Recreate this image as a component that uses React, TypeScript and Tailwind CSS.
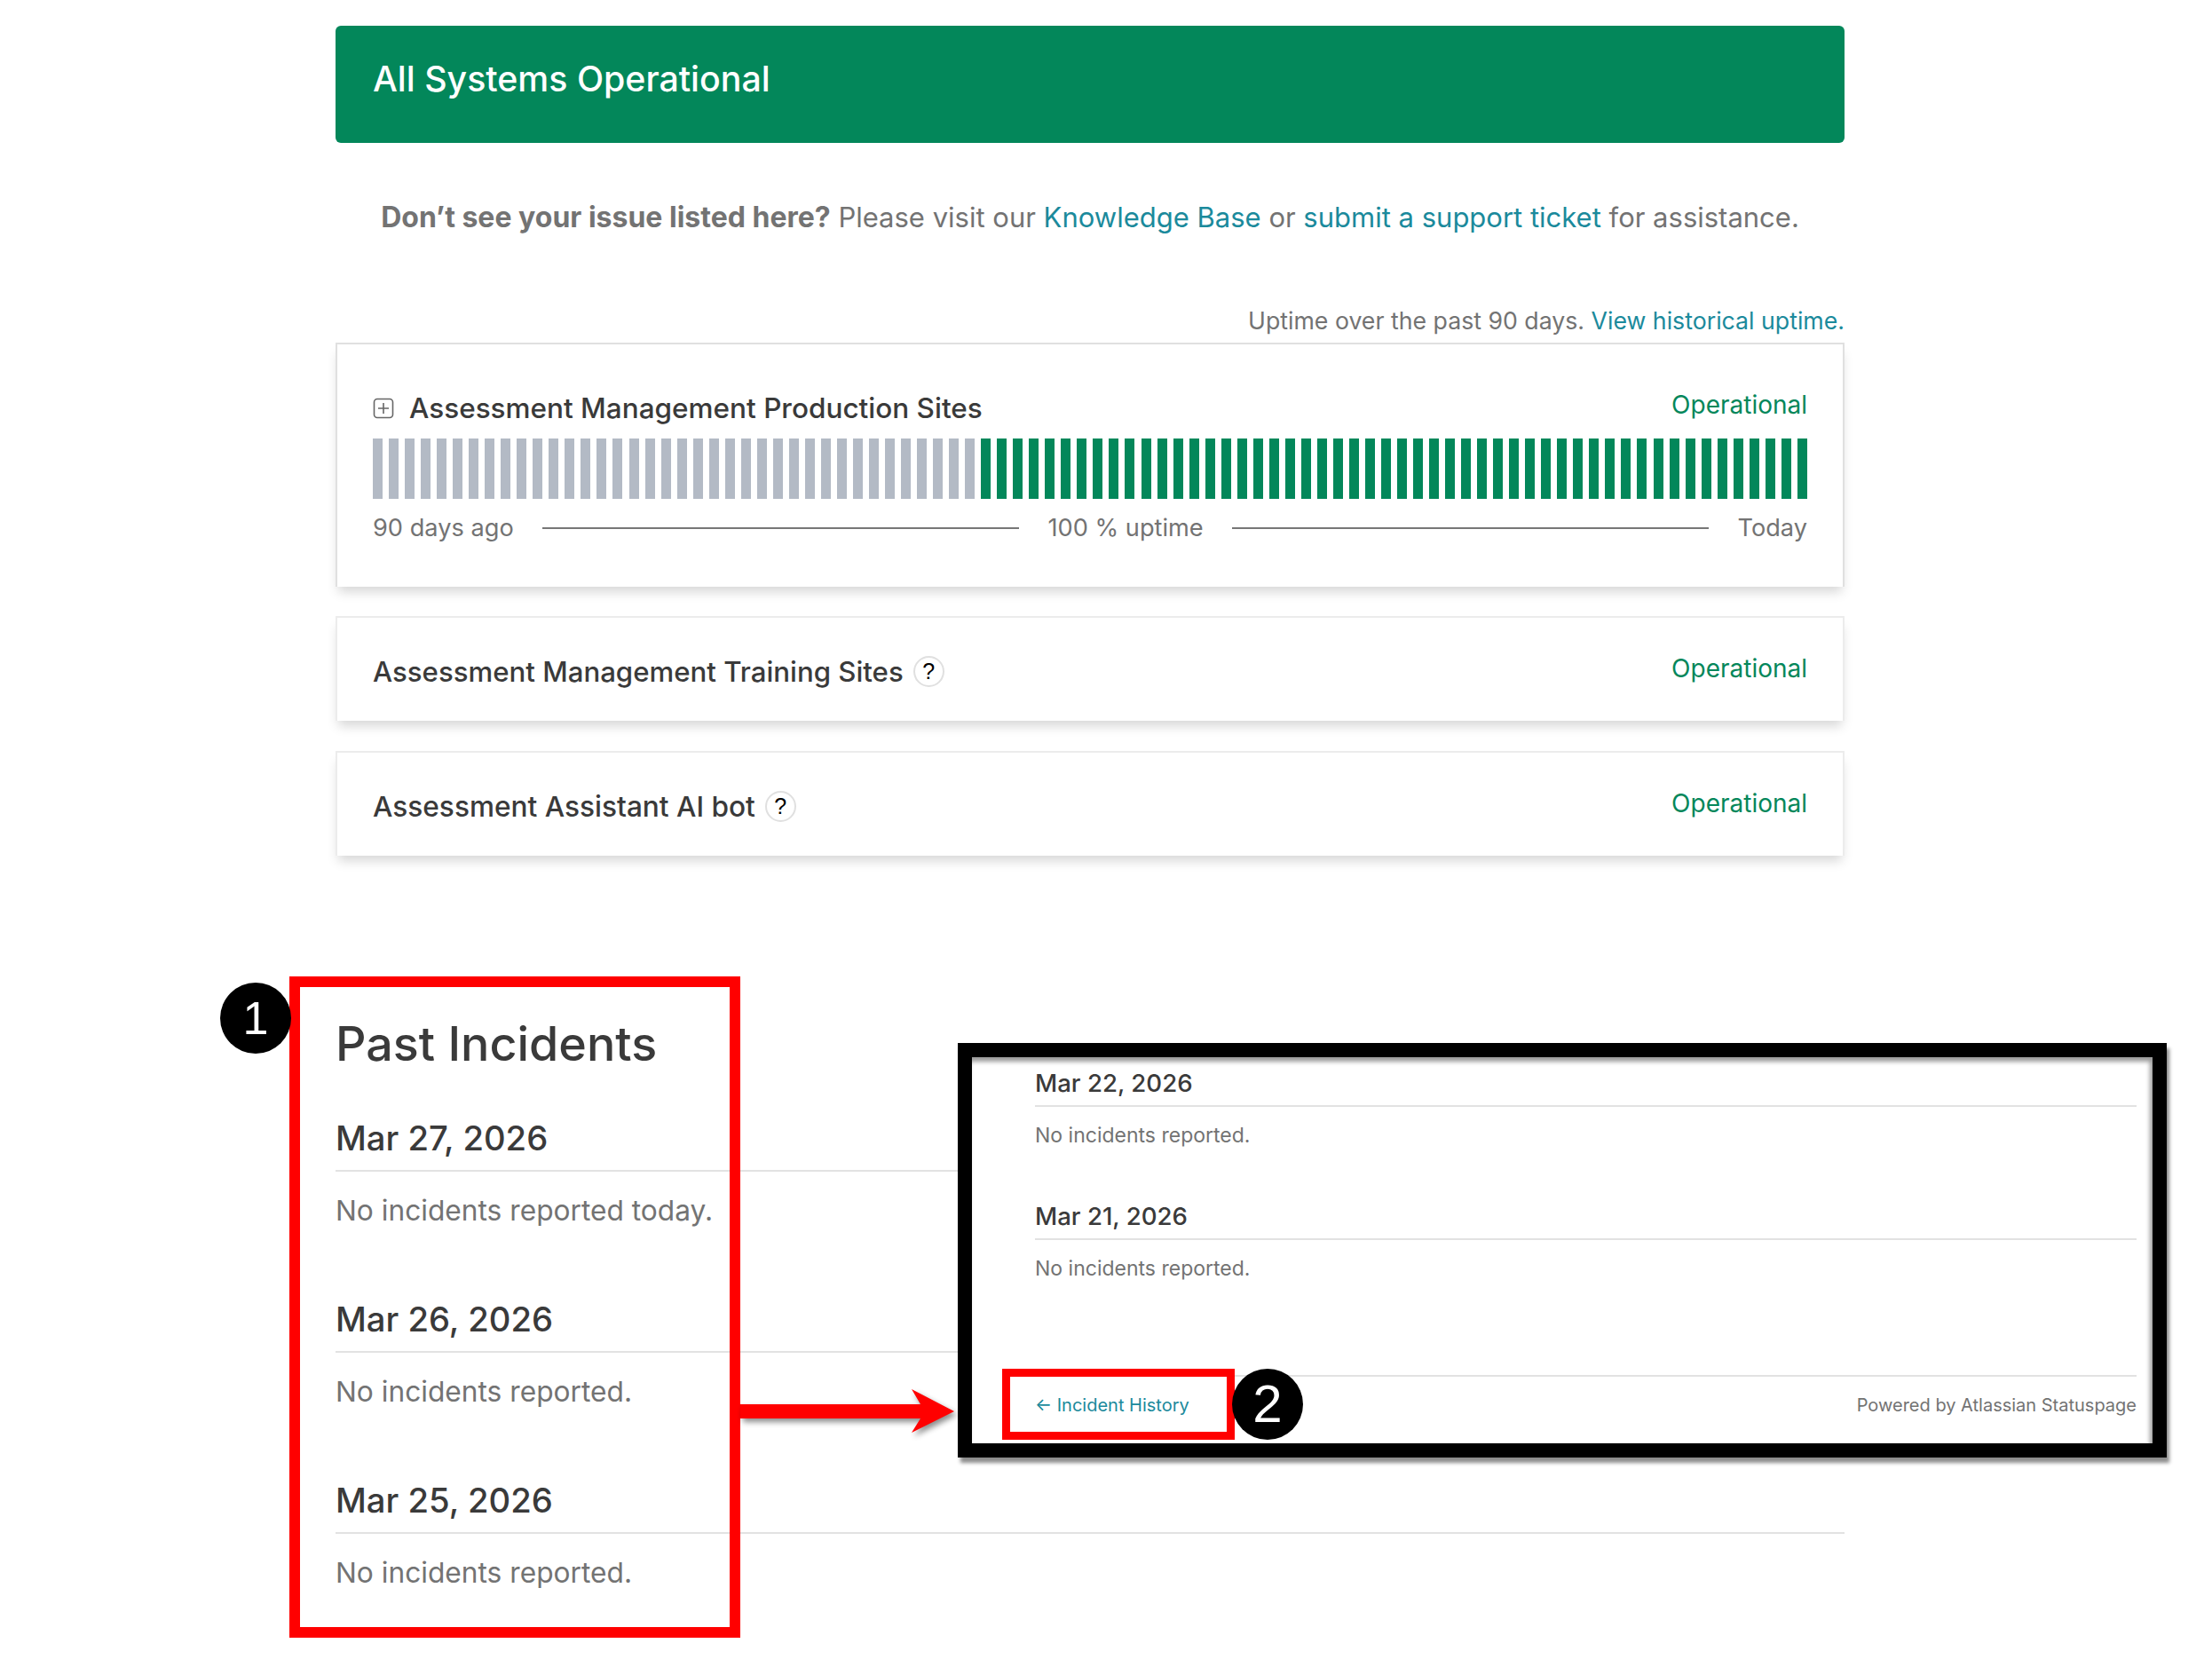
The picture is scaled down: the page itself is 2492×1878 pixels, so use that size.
const GREY_DAYS = 38;
const DAYS = Array.from({ length: 90 }, (_, i) => i);

const TEAL = 'text-[#1b8a9c]';

function Help() {
  return (
    <span className="ml-[11px] flex h-[35px] w-[35px] items-center justify-center rounded-full border-2 border-[#e0e0e0] font-['Liberation_Sans',sans-serif] text-[25px] text-black">?</span>
  );
}

function Status({ mb }: { mb: string }) {
  return <span className={`text-[28px] text-[#05875b] ${mb}`}>Operational</span>;
}

function SmallCard({ name, top, size }: { name: string; top: string; size: string }) {
  return (
    <div className={`flex h-[118px] items-center justify-between border-x-2 border-t-2 border-[#ececec] bg-white px-[40px] shadow-[0_9px_12px_-3px_rgba(0,0,0,0.16)] ${top}`}>
      <div className={`flex items-center pt-[6px] font-medium text-[#3a3a3a] ${size}`}>
        {name}
        <Help />
      </div>
      <Status mb="mb-[3px]" />
    </div>
  );
}

function Day({ date, text }: { date: string; text: string }) {
  return (
    <div className="mb-[72px]">
      <h3 className="h-[68px] border-b-2 border-[#e2e2e2] text-[38.2px] font-medium leading-[60px] text-[#3a3a3a]">{date}</h3>
      <p className="mt-[24px] text-[31.7px] leading-[40px] text-[#737373]">{text}</p>
    </div>
  );
}

function MiniDay({ date, mb }: { date: string; mb: string }) {
  return (
    <div className={mb}>
      <h4 className="h-[47px] border-b-2 border-[#e2e2e2] text-[27.6px] font-medium leading-[40px] text-[#3a3a3a]">{date}</h4>
      <p className="mt-[15px] text-[23px] leading-[34px] text-[#737373]">No incidents reported.</p>
    </div>
  );
}

export default function App() {
  return (
    <div className="relative h-[1878px] w-[2492px] overflow-hidden bg-white font-['Inter',sans-serif]">
      <div className="ml-[378px] w-[1700px] pt-[29px]">
        <div className="flex h-[132px] items-center rounded-[6px] bg-[#03875a] px-[42px] pb-[12px] text-[39.3px] font-medium text-white">
          All Systems Operational
        </div>

        <p className="mt-[54px] text-center text-[31px] leading-[60px] text-[#737373]">
          <b className="text-[32px] font-bold">Don’t see your issue listed here?</b> Please visit our{' '}
          <a className={TEAL}>Knowledge Base</a> or <a className={TEAL}>submit a support ticket</a> for assistance.
        </p>

        <p className="mt-[66px] text-right text-[26.7px] leading-[40px] text-[#737373]">
          Uptime over the past 90 days. <a className={TEAL}>View historical uptime.</a>
        </p>

        <div className="mt-[5px] h-[275px] border-2 border-b-0 border-[#e0e0e0] bg-white px-[40px] pt-[50px] shadow-[0_9px_12px_-3px_rgba(0,0,0,0.16)]">
          <div className="flex h-[40px] items-center justify-between">
            <div className="flex items-center pt-[3px] text-[31.5px] font-medium text-[#3a3a3a]">
              <svg width="24" height="24" viewBox="0 0 24 24" fill="none" stroke="#666" strokeWidth="1.6" className="mr-[17px]">
                <rect x="1.5" y="1.5" width="21" height="21" rx="3.5" />
                <path d="M12 6v12M6 12h12" />
              </svg>
              Assessment Management Production Sites
            </div>
            <Status mb="mb-[4px]" />
          </div>
          <div className="mt-[16px] flex h-[68px] justify-between">
            {DAYS.map(i => (
              <div key={i} className={i < GREY_DAYS ? 'w-[11px] bg-[#b3bac5]' : 'w-[11px] bg-[#03875a]'} />
            ))}
          </div>
          <div className="mt-[13px] flex h-[40px] items-center gap-[32px] text-[27.2px] text-[#737373]">
            <span>90 days ago</span>
            <div className="h-[2px] flex-1 bg-[#777]" />
            <span>100 % uptime</span>
            <div className="h-[2px] flex-1 bg-[#777]" />
            <span>Today</span>
          </div>
        </div>

        <SmallCard name="Assessment Management Training Sites" top="mt-[33px]" size="text-[31.2px]" />
        <SmallCard name="Assessment Assistant AI bot" top="mt-[34px]" size="text-[31.6px]" />

        <h2 className="mt-[172px] mb-[36px] h-[80px] text-[53.8px] font-medium leading-[80px] text-[#3a3a3a]">Past Incidents</h2>
        <Day date="Mar 27, 2026" text="No incidents reported today." />
        <Day date="Mar 26, 2026" text="No incidents reported." />
        <Day date="Mar 25, 2026" text="No incidents reported." />
      </div>

      {/* callouts on top of the page */}
      <div className="absolute left-[326px] top-[1100px] h-[745px] w-[508px] border-[12px] border-[#ff0000]" />
      <div className="absolute left-[248px] top-[1107px] flex h-[80px] w-[80px] items-center justify-center rounded-full bg-black font-['Liberation_Sans',sans-serif] text-[52px] text-white">1</div>

      <svg className="absolute left-[834px] top-[1560px] drop-shadow-[3px_4px_3px_rgba(0,0,0,0.45)]" width="244" height="60" viewBox="0 0 244 60">
        <path d="M0 22h203L193 5l48 25-48 24 10-16H0z" fill="#ff0000" />
      </svg>

      <div className="absolute left-[1079px] top-[1175px] h-[467px] w-[1362px] border-[16px] border-black bg-white pl-[71px] pr-[18px] pt-[9px] shadow-[3px_6px_4px_rgba(0,0,0,0.45)]">
        <div className="pointer-events-none absolute inset-0 shadow-[inset_-3px_5px_5px_rgba(0,0,0,0.4)]" />
        <MiniDay date="Mar 22, 2026" mb="mb-[54px]" />
        <MiniDay date="Mar 21, 2026" mb="mb-[103px]" />
        <div className="flex h-[66px] items-center justify-between border-t-2 border-[#e2e2e2] text-[20px]">
          <a className={TEAL}>← Incident History</a>
          <span className="text-[#737373]">Powered by Atlassian Statuspage</span>
        </div>
      </div>

      <div className="absolute left-[1129px] top-[1542px] h-[80px] w-[262px] border-[9px] border-[#ff0000]" />
      <div className="absolute left-[1388px] top-[1542px] flex h-[80px] w-[80px] items-center justify-center rounded-full bg-black font-['Liberation_Sans',sans-serif] text-[60px] text-white">2</div>
    </div>
  );
}
